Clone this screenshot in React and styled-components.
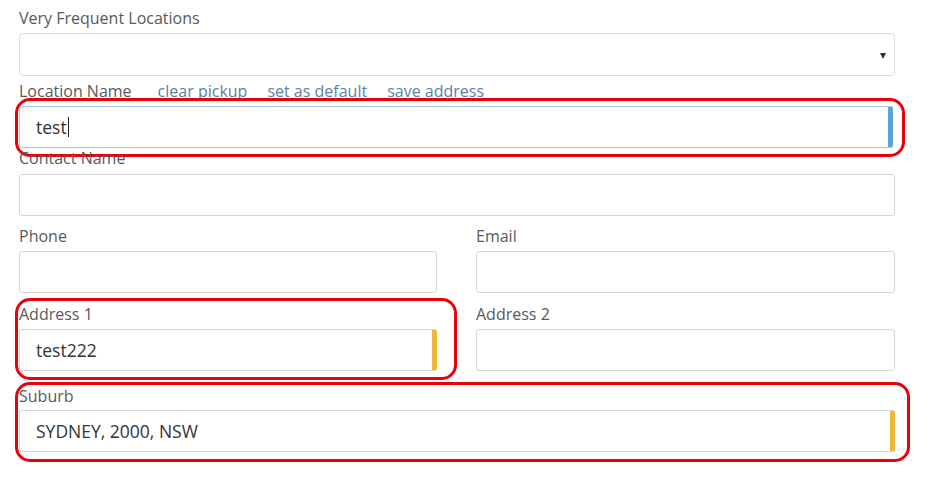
import React from "react";
import styled, { createGlobalStyle } from "styled-components";

const GlobalStyle = createGlobalStyle`
  body {
    margin: 0;
    background: #ffffff;
    font-family: "Open Sans", "Liberation Sans", sans-serif;
  }
`;

const App = () => {
  return (
    <>
      <GlobalStyle />
      <Form>
        {/* frequent locations dropdown */}
        <Field>
          <Label>Very Frequent Locations</Label>
          <SelectBox>
            <Arrow />
          </SelectBox>
        </Field>

        <Field $top={5}>
          <LabelRow>
            <Label>Location Name</Label>
            <Links>
              <Link>clear pickup</Link>
              <Link>set as default</Link>
              <Link>save address</Link>
            </Links>
          </LabelRow>
          <Anchor>
            <Input $focus>
              test
              <Caret />
            </Input>
            <Highlight $l={-4} $t={-8} $r={-10} $b={-9} />
          </Anchor>
        </Field>

        <Field $top={0} $gap={6}>
          <Label>Contact Name</Label>
          <Input />
        </Field>

        <Row $top={10}>
          <Field>
            <Label>Phone</Label>
            <Input />
          </Field>
          <Field>
            <Label>Email</Label>
            <Input />
          </Field>
        </Row>

        <Row $top={11}>
          <Field>
            <Label>Address 1</Label>
            <Input $filled>test222</Input>
            <Highlight $l={-4} $t={-6} $r={-20} $b={-9} />
          </Field>
          <Field>
            <Label>Address 2</Label>
            <Input />
          </Field>
        </Row>

        <Field $top={15} $gap={4}>
          <Label>Suburb</Label>
          <Input $filled>SYDNEY, 2000, NSW</Input>
          <Highlight $l={-4} $t={-4} $r={-15} $b={-10} />
        </Field>
      </Form>
    </>
  );
};

export default App;

const Form = styled.div`
  width: 876px;
  padding: 8px 0 28px 19px;
  display: flex;
  flex-direction: column;
`;

const Field = styled.div`
  position: relative;
  display: flex;
  flex-direction: column;
  gap: ${(p) => (p.$gap != null ? p.$gap : 5)}px;
  margin-top: ${(p) => p.$top || 0}px;
`;

const Row = styled.div`
  display: grid;
  grid-template-columns: 418px 419px;
  column-gap: 39px;
  margin-top: ${(p) => p.$top || 0}px;
`;

const Label = styled.div`
  font-size: 16px;
  line-height: 20px;
  height: 20px;
  color: #595959;
  white-space: nowrap;
`;

const LabelRow = styled.div`
  display: flex;
  align-items: center;
  gap: 26px;
`;

const Links = styled.div`
  display: flex;
  gap: 20px;
`;

const Link = styled.span`
  font-size: 16px;
  line-height: 20px;
  color: #5b7fa6;
  white-space: nowrap;
`;

const SelectBox = styled.div`
  position: relative;
  height: 43px;
  box-sizing: border-box;
  border: 1px solid #dcdcdc;
  border-radius: 4px;
  background: #fff;
`;

const Arrow = styled.span`
  position: absolute;
  right: 8px;
  top: 19px;
  width: 0;
  height: 0;
  border-left: 3px solid transparent;
  border-right: 3px solid transparent;
  border-top: 6px solid #333;
`;

const Anchor = styled.div`
  position: relative;
`;

const Input = styled.div`
  height: 42px;
  box-sizing: border-box;
  border: 1px solid ${(p) => (p.$focus ? "#a9cbe6" : "#d6d6d6")};
  border-right: ${(p) =>
    p.$focus ? "5px solid #5ea2dd" : p.$filled ? "5px solid #efb73e" : "1px solid #d6d6d6"};
  border-radius: 3px;
  background: #fff;
  padding: 0 16px;
  display: flex;
  align-items: center;
  font-size: 17.5px;
  color: #333333;
  ${(p) => p.$focus && "margin-right: 2px;"}
`;

const Caret = styled.span`
  display: inline-block;
  width: 1px;
  height: 20px;
  background: #222;
  margin-left: 1px;
`;

const Highlight = styled.div`
  position: absolute;
  left: ${(p) => p.$l}px;
  top: ${(p) => p.$t}px;
  right: ${(p) => p.$r}px;
  bottom: ${(p) => p.$b}px;
  border: 3px solid #e8000b;
  border-radius: 15px;
  pointer-events: none;
`;
